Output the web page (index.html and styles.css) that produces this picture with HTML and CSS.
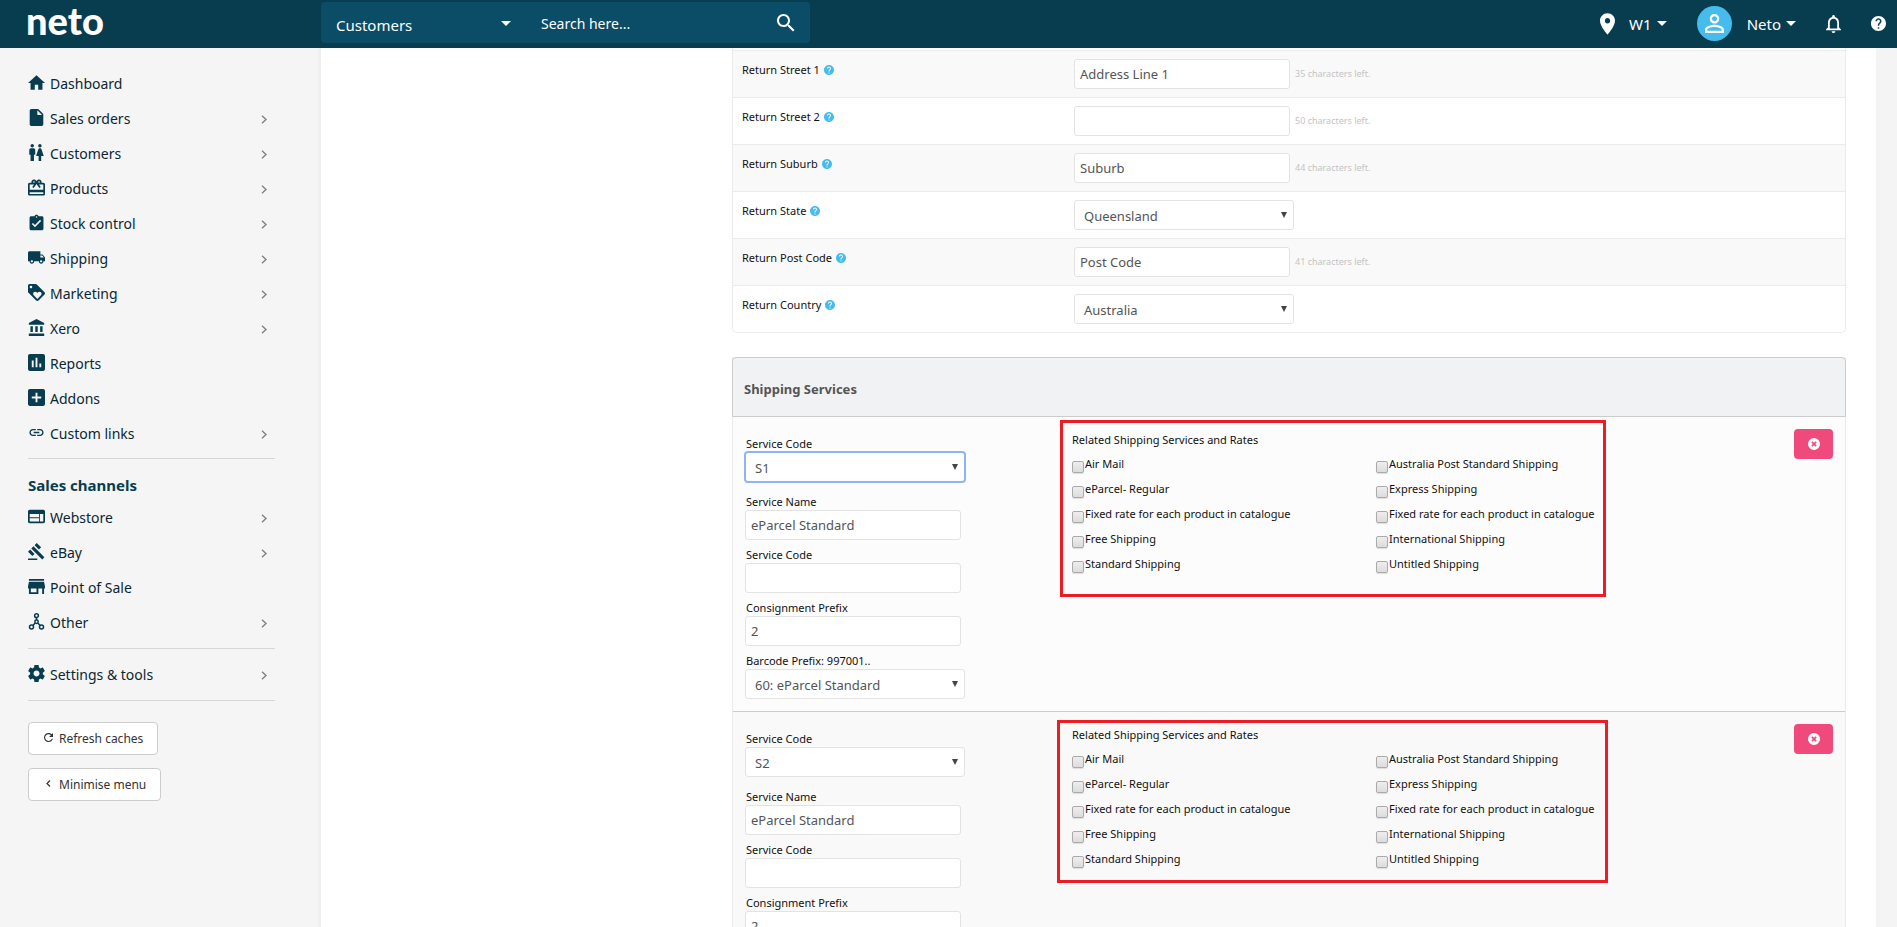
FILE: index.html
```html
<!DOCTYPE html>
<html lang="en">
<head>
<meta charset="utf-8">
<title>Neto - Shipping Services</title>
<link rel="stylesheet" href="styles.css">
</head>
<body>
<svg class="sprite" aria-hidden="true">
  <symbol id="i-home" viewBox="2 3 20 17"><path d="M10 20v-6h4v6h5v-8h3L12 3 2 12h3v8z"/></symbol>
  <symbol id="i-file" viewBox="4 2 16 20"><path d="M6 2c-1.1 0-2 .9-2 2v16c0 1.1.9 2 2 2h12c1.1 0 2-.9 2-2V8l-6-6H6zm7 7V3.500L18.500 9H13z"/></symbol>
  <symbol id="i-people" viewBox="2.500 2 20 20"><path d="M5.500 22v-7.500H4V9c0-1.100.9-2 2-2h3c1.100 0 2 .9 2 2v5.500H9.500V22h-4zM18 22v-6h3l-2.540-7.630C18.180 7.550 17.420 7 16.560 7h-.12c-.86 0-1.630.55-1.900 1.370L12 16h3v6h3zM7.500 6c1.110 0 2-.89 2-2s-.89-2-2-2-2 .89-2 2 .89 2 2 2zm9 0c1.110 0 2-.89 2-2s-.89-2-2-2-2 .89-2 2 .89 2 2 2z"/></symbol>
  <symbol id="i-gift" viewBox="2 2 20 19"><path d="M20 6h-2.180c.11-.31.18-.65.18-1 0-1.660-1.340-3-3-3-1.050 0-1.960.54-2.500 1.350l-.5.67-.5-.68C10.960 2.540 10.050 2 9 2 7.340 2 6 3.340 6 5c0 .35.07.69.18 1H4c-1.110 0-1.990.89-1.990 2L2 19c0 1.110.89 2 2 2h16c1.110 0 2-.89 2-2V8c0-1.110-.89-2-2-2zm-5-2c.55 0 1 .45 1 1s-.45 1-1 1-1-.45-1-1 .45-1 1-1zM9 4c.55 0 1 .45 1 1s-.45 1-1 1-1-.45-1-1 .45-1 1-1zm11 15H4v-2h16v2zm0-5H4V8h5.080L7 10.830 8.620 12 11 8.760l1-1.360 1 1.360L15.380 12 17 10.830 14.920 8H20v6z"/></symbol>
  <symbol id="i-clip" viewBox="1 0 22 22"><path d="M19 3h-4.180C14.400 1.840 13.300 1 12 1c-1.300 0-2.400.84-2.820 2H5c-1.100 0-2 .9-2 2v14c0 1.100.9 2 2 2h14c1.100 0 2-.9 2-2V5c0-1.100-.9-2-2-2zm-7 0c.55 0 1 .45 1 1s-.45 1-1 1-1-.45-1-1 .45-1 1-1zm-2 14l-4-4 1.410-1.410L10 14.170l6.590-6.590L18 9l-8 8z"/></symbol>
  <symbol id="i-truck" viewBox="1 3 22 18"><path d="M20 8h-3V4H3c-1.100 0-2 .9-2 2v11h2c0 1.660 1.340 3 3 3s3-1.340 3-3h6c0 1.660 1.340 3 3 3s3-1.340 3-3h2v-5l-3-4zM6 18.500c-.83 0-1.500-.67-1.500-1.500s.67-1.500 1.500-1.500 1.500.67 1.500 1.500-.67 1.500-1.500 1.500zm13.500-9l1.960 2.500H17V9.500h2.500zm-1.500 9c-.83 0-1.500-.67-1.500-1.500s.67-1.500 1.500-1.500 1.500.67 1.500 1.500-.67 1.500-1.500 1.500z"/></symbol>
  <symbol id="i-tag" viewBox="2 2 20 20"><path d="M21.410 11.580l-9-9C12.050 2.220 11.550 2 11 2H4c-1.100 0-2 .9-2 2v7c0 .55.22 1.050.59 1.420l9 9c.36.36.86.58 1.410.58.55 0 1.050-.22 1.410-.59l7-7c.37-.36.59-.86.59-1.410 0-.55-.23-1.060-.59-1.420zM5.500 7C4.670 7 4 6.330 4 5.500S4.670 4 5.500 4 7 4.670 7 5.500 6.330 7 5.500 7zm11.770 8.270L13 19.540l-4.270-4.270C8.280 14.810 8 14.190 8 13.500c0-1.380 1.120-2.500 2.500-2.500.69 0 1.320.28 1.770.74l.73.72.73-.73c.45-.45 1.080-.73 1.770-.73 1.380 0 2.500 1.120 2.500 2.500 0 .69-.28 1.320-.73 1.770z"/></symbol>
  <symbol id="i-bank" viewBox="1 1 21 21"><path d="M4 10v7h3v-7H4zm6 0v7h3v-7h-3zM2 22h19v-3H2v3zm14-12v7h3v-7h-3zm-4.500-9L2 6v2h19V6l-9.500-5z"/></symbol>
  <symbol id="i-chart" viewBox="3 3 18 18"><path d="M19 3H5c-1.100 0-2 .9-2 2v14c0 1.100.9 2 2 2h14c1.100 0 2-.9 2-2V5c0-1.100-.9-2-2-2zM9 17H7v-7h2v7zm4 0h-2V7h2v10zm4 0h-2v-4h2v4z"/></symbol>
  <symbol id="i-plus" viewBox="3 3 18 18"><path d="M19 3H5c-1.110 0-2 .9-2 2v14c0 1.100.89 2 2 2h14c1.100 0 2-.9 2-2V5c0-1.100-.9-2-2-2zm-2 10h-4v4h-2v-4H7v-2h4V7h2v4h4v2z"/></symbol>
  <symbol id="i-link" viewBox="0 0 24 24"><path d="M3.900 12c0-1.710 1.390-3.100 3.100-3.100h4V7H7c-2.760 0-5 2.240-5 5s2.240 5 5 5h4v-1.900H7c-1.710 0-3.100-1.390-3.100-3.100zM8 13h8v-2H8v2zm9-6h-4v1.900h4c1.710 0 3.100 1.390 3.100 3.100s-1.390 3.100-3.100 3.100h-4V17h4c2.760 0 5-2.240 5-5s-2.240-5-5-5z"/></symbol>
  <symbol id="i-web" viewBox="2 2 20 20"><path d="M20 4H4c-1.100 0-2 .9-2 2v12c0 1.100.9 2 2 2h16c1.100 0 2-.9 2-2V6c0-1.100-.9-2-2-2zm-5 14H4v-4h11v4zm0-5H4V9h11v4zm5 5h-4V9h4v9z"/></symbol>
  <symbol id="i-gavel" viewBox="1 1 22 22"><path d="M1 21h12v2H1zM5.245 8.070l2.830-2.827 14.140 14.142-2.828 2.828zM12.317 1l5.657 5.656-2.830 2.830-5.654-5.660zM3.825 9.485l5.657 5.657-2.828 2.828-5.657-5.657z"/></symbol>
  <symbol id="i-store" viewBox="3 3 18 18"><path d="M20 4H4v2h16V4zm1 10v-2l-1-5H4l-1 5v2h1v6h10v-6h4v6h2v-6h1zm-9 4H6v-4h6v4z"/></symbol>
  <symbol id="i-nodes" viewBox="0 0 17 17"><g fill="none" stroke="currentColor" stroke-width="1.500"><circle cx="8.500" cy="2.700" r="1.900"/><circle cx="8.500" cy="8.800" r="1.700"/><circle cx="3.500" cy="14" r="2"/><circle cx="13.500" cy="14" r="2"/><path d="M8.500 4.600V7M7.200 10l-2.300 2.600M9.800 10l2.300 2.600"/></g></symbol>
  <symbol id="i-gear" viewBox="2 2 20 20"><path d="M19.430 12.980c.04-.32.07-.64.07-.98s-.03-.66-.07-.98l2.110-1.650c.19-.15.24-.42.12-.64l-2-3.460c-.12-.22-.39-.3-.61-.22l-2.490 1c-.52-.4-1.080-.73-1.690-.98l-.38-2.650C14.460 2.180 14.250 2 14 2h-4c-.25 0-.46.18-.49.42l-.38 2.650c-.61.25-1.170.59-1.690.98l-2.490-1c-.23-.09-.49 0-.61.22l-2 3.460c-.13.22-.07.49.12.64l2.110 1.650c-.04.32-.07.65-.07.98s.03.66.07.98l-2.110 1.650c-.19.15-.24.42-.12.64l2 3.460c.12.22.39.3.61.22l2.490-1c.52.4 1.080.73 1.690.98l.38 2.650c.03.24.24.42.49.42h4c.25 0 .46-.18.49-.42l.38-2.650c.61-.25 1.170-.59 1.690-.98l2.490 1c.23.09.49 0 .61-.22l2-3.460c.12-.22.07-.49-.12-.64l-2.110-1.650zM12 15.500c-1.930 0-3.500-1.570-3.500-3.500s1.570-3.500 3.500-3.500 3.500 1.570 3.500 3.500-1.570 3.500-3.500 3.500z"/></symbol>
  <symbol id="i-chev" viewBox="0 0 6 9"><path d="M1 .7l4 3.800-4 3.800" fill="none" stroke="currentColor" stroke-width="1.400"/></symbol>
  <symbol id="i-back" viewBox="0 0 6 9"><path d="M4.500 1.500l-3 3 3 3" fill="none" stroke="currentColor" stroke-width="1.200"/></symbol>
  <symbol id="i-refresh" viewBox="4 4 16 16"><path d="M17.650 6.350C16.200 4.900 14.210 4 12 4c-4.420 0-7.990 3.580-7.990 8s3.570 8 7.990 8c3.730 0 6.840-2.550 7.730-6h-2.080c-.82 2.330-3.040 4-5.650 4-3.310 0-6-2.690-6-6s2.690-6 6-6c1.660 0 3.140.69 4.220 1.780L13 11h7V4l-2.350 2.350z"/></symbol>
  <symbol id="i-search" viewBox="3 3 18 18"><path d="M15.500 14h-.79l-.28-.27C15.410 12.590 16 11.110 16 9.500 16 5.910 13.090 3 9.500 3S3 5.910 3 9.500 5.910 16 9.500 16c1.610 0 3.090-.59 4.230-1.570l.27.28v.79l5 4.990L20.490 19l-4.990-5zm-6 0C7.010 14 5 11.990 5 9.500S7.010 5 9.500 5 14 7.010 14 9.500 11.990 14 9.500 14z"/></symbol>
  <symbol id="i-pin" viewBox="5 2 14 20"><path d="M12 2C8.130 2 5 5.130 5 9c0 5.250 7 13 7 13s7-7.750 7-13c0-3.870-3.130-7-7-7zm0 9.500c-1.380 0-2.500-1.120-2.500-2.500s1.120-2.500 2.500-2.500 2.500 1.120 2.500 2.500-1.120 2.500-2.500 2.500z"/></symbol>
  <symbol id="i-person" viewBox="4 4 16 16"><path d="M12 5.900c1.160 0 2.100.94 2.100 2.100s-.94 2.100-2.100 2.100S9.900 9.160 9.900 8s.94-2.100 2.100-2.100m0 9c2.970 0 6.100 1.460 6.100 2.100v1.100H5.900V17c0-.64 3.130-2.100 6.100-2.100M12 4C9.790 4 8 5.790 8 8s1.790 4 4 4 4-1.790 4-4-1.790-4-4-4zm0 9c-2.670 0-8 1.340-8 4v3h16v-3c0-2.660-5.330-4-8-4z"/></symbol>
  <symbol id="i-bell" viewBox="4 2.500 16 19.500"><path d="M12 22c1.100 0 2-.9 2-2h-4c0 1.100.9 2 2 2zm6-6v-5c0-3.070-1.630-5.640-4.500-6.320V4c0-.83-.67-1.500-1.500-1.500s-1.500.67-1.500 1.500v.68C7.640 5.360 6 7.920 6 11v5l-2 2v1h16v-1l-2-2zm-2 1H8v-6c0-2.480 1.510-4.500 4-4.500s4 2.020 4 4.500v6z"/></symbol>
  <symbol id="i-help" viewBox="2 2 20 20"><path d="M12 2C6.480 2 2 6.480 2 12s4.480 10 10 10 10-4.480 10-10S17.520 2 12 2zm1 17h-2v-2h2v2zm2.070-7.750l-.9.920C13.450 12.900 13 13.500 13 15h-2v-.5c0-1.100.45-2.100 1.170-2.830l1.240-1.260c.37-.36.59-.86.59-1.410 0-1.100-.9-2-2-2s-2 .9-2 2H8c0-2.210 1.790-4 4-4s4 1.790 4 4c0 .88-.36 1.680-.93 2.250z"/></symbol>
  <symbol id="i-close" viewBox="0 0 12 12"><path fill-rule="evenodd" d="M6 0a6 6 0 100 12A6 6 0 006 0zM3.300 4.500l1.200-1.200L6 4.800l1.500-1.500 1.200 1.200L7.200 6l1.500 1.500-1.200 1.200L6 7.200 4.500 8.700 3.300 7.500 4.800 6z"/></symbol>
</svg>

<header class="topbar">
  <div class="brand"><a class="logo" href="#">neto</a></div>
  <form class="search">
    <select class="search-scope" aria-label="Search in"><option>Customers</option></select>
    <input class="search-text" type="text" placeholder="Search here..." aria-label="Search">
    <button class="search-go" type="button" aria-label="Search"><svg><use href="#i-search"/></svg></button>
  </form>
  <nav class="tools" aria-label="Account">
    <a class="tool tool-site" href="#"><svg class="pin"><use href="#i-pin"/></svg><span class="caret">W1</span></a>
    <a class="tool tool-user" href="#"><span class="avatar"><svg><use href="#i-person"/></svg></span><span class="caret">Neto</span></a>
    <a class="tool tool-bell" href="#" aria-label="Notifications"><svg class="bell"><use href="#i-bell"/></svg></a>
    <a class="tool" href="#" aria-label="Help"><svg class="help"><use href="#i-help"/></svg></a>
  </nav>
</header>

<div class="shell">
  <aside class="sidebar">
    <ul class="menu">
      <li><a href="#"><svg class="ico"><use href="#i-home"/></svg>Dashboard</a></li>
      <li><a href="#"><svg class="ico"><use href="#i-file"/></svg>Sales orders<svg class="chev"><use href="#i-chev"/></svg></a></li>
      <li><a href="#"><svg class="ico"><use href="#i-people"/></svg>Customers<svg class="chev"><use href="#i-chev"/></svg></a></li>
      <li><a href="#"><svg class="ico"><use href="#i-gift"/></svg>Products<svg class="chev"><use href="#i-chev"/></svg></a></li>
      <li><a href="#"><svg class="ico"><use href="#i-clip"/></svg>Stock control<svg class="chev"><use href="#i-chev"/></svg></a></li>
      <li><a href="#"><svg class="ico"><use href="#i-truck"/></svg>Shipping<svg class="chev"><use href="#i-chev"/></svg></a></li>
      <li><a href="#"><svg class="ico"><use href="#i-tag"/></svg>Marketing<svg class="chev"><use href="#i-chev"/></svg></a></li>
      <li><a href="#"><svg class="ico"><use href="#i-bank"/></svg>Xero<svg class="chev"><use href="#i-chev"/></svg></a></li>
      <li><a href="#"><svg class="ico"><use href="#i-chart"/></svg>Reports</a></li>
      <li><a href="#"><svg class="ico"><use href="#i-plus"/></svg>Addons</a></li>
      <li><a href="#"><svg class="ico"><use href="#i-link"/></svg>Custom links<svg class="chev"><use href="#i-chev"/></svg></a></li>
    </ul>
    <h2 class="menu-title">Sales channels</h2>
    <ul class="menu menu-channels">
      <li><a href="#"><svg class="ico"><use href="#i-web"/></svg>Webstore<svg class="chev"><use href="#i-chev"/></svg></a></li>
      <li><a href="#"><svg class="ico"><use href="#i-gavel"/></svg>eBay<svg class="chev"><use href="#i-chev"/></svg></a></li>
      <li><a href="#"><svg class="ico"><use href="#i-store"/></svg>Point of Sale</a></li>
      <li><a href="#"><svg class="ico"><use href="#i-nodes"/></svg>Other<svg class="chev"><use href="#i-chev"/></svg></a></li>
    </ul>
    <ul class="menu menu-settings">
      <li><a href="#"><svg class="ico"><use href="#i-gear"/></svg>Settings &amp; tools<svg class="chev"><use href="#i-chev"/></svg></a></li>
    </ul>
    <div class="side-buttons">
      <button class="side-btn" type="button"><svg><use href="#i-refresh"/></svg>Refresh caches</button>
      <button class="side-btn" type="button"><svg><use href="#i-back"/></svg>Minimise menu</button>
    </div>
  </aside>

  <main class="page">
    <div class="content">
      <div class="address">
        <div class="address-row"><div class="address-label"><label for="st1">Return Street 1</label><svg class="hint"><use href="#i-help"/></svg></div><input class="field" id="st1" type="text" value="Address Line 1"><span class="left">35 characters left.</span></div>
        <div class="address-row"><div class="address-label"><label for="st2">Return Street 2</label><svg class="hint"><use href="#i-help"/></svg></div><input class="field" id="st2" type="text"><span class="left">50 characters left.</span></div>
        <div class="address-row"><div class="address-label"><label for="sub">Return Suburb</label><svg class="hint"><use href="#i-help"/></svg></div><input class="field" id="sub" type="text" value="Suburb"><span class="left">44 characters left.</span></div>
        <div class="address-row"><div class="address-label"><label for="state">Return State</label><svg class="hint"><use href="#i-help"/></svg></div><select class="field" id="state"><option>Queensland</option></select></div>
        <div class="address-row"><div class="address-label"><label for="pc">Return Post Code</label><svg class="hint"><use href="#i-help"/></svg></div><input class="field" id="pc" type="text" value="Post Code"><span class="left">41 characters left.</span></div>
        <div class="address-row"><div class="address-label"><label for="country">Return Country</label><svg class="hint"><use href="#i-help"/></svg></div><select class="field" id="country"><option>Australia</option></select></div>
      </div>

      <section class="services">
        <h2 class="services-title">Shipping Services</h2>

        <div class="service">
          <div class="service-form">
            <label for="a1">Service Code</label>
            <select class="field code active" id="a1"><option>S1</option></select>
            <label for="a2">Service Name</label>
            <input class="field" id="a2" type="text" value="eParcel Standard">
            <label for="a3">Service Code</label>
            <input class="field" id="a3" type="text">
            <label for="a4">Consignment Prefix</label>
            <input class="field" id="a4" type="text" value="2">
            <label for="a5">Barcode Prefix: 997001..</label>
            <select class="field" id="a5"><option>60: eParcel Standard</option></select>
          </div>
          <fieldset class="rates">
            <legend>Related Shipping Services and Rates</legend>
            <div class="rate-grid">
              <label><input type="checkbox">Air Mail</label>
              <label><input type="checkbox">Australia Post Standard Shipping</label>
              <label><input type="checkbox">eParcel- Regular</label>
              <label><input type="checkbox">Express Shipping</label>
              <label><input type="checkbox">Fixed rate for each product in catalogue</label>
              <label><input type="checkbox">Fixed rate for each product in catalogue</label>
              <label><input type="checkbox">Free Shipping</label>
              <label><input type="checkbox">International Shipping</label>
              <label><input type="checkbox">Standard Shipping</label>
              <label><input type="checkbox">Untitled Shipping</label>
            </div>
            <span class="mark mark-first"></span>
          </fieldset>
          <button class="remove" type="button" aria-label="Remove service"><svg><use href="#i-close"/></svg></button>
        </div>

        <div class="service">
          <div class="service-form">
            <label for="b1">Service Code</label>
            <select class="field code" id="b1"><option>S2</option></select>
            <label for="b2">Service Name</label>
            <input class="field" id="b2" type="text" value="eParcel Standard">
            <label for="b3">Service Code</label>
            <input class="field" id="b3" type="text">
            <label for="b4">Consignment Prefix</label>
            <input class="field" id="b4" type="text" value="2">
          </div>
          <fieldset class="rates">
            <legend>Related Shipping Services and Rates</legend>
            <div class="rate-grid">
              <label><input type="checkbox">Air Mail</label>
              <label><input type="checkbox">Australia Post Standard Shipping</label>
              <label><input type="checkbox">eParcel- Regular</label>
              <label><input type="checkbox">Express Shipping</label>
              <label><input type="checkbox">Fixed rate for each product in catalogue</label>
              <label><input type="checkbox">Fixed rate for each product in catalogue</label>
              <label><input type="checkbox">Free Shipping</label>
              <label><input type="checkbox">International Shipping</label>
              <label><input type="checkbox">Standard Shipping</label>
              <label><input type="checkbox">Untitled Shipping</label>
            </div>
            <span class="mark mark-second"></span>
          </fieldset>
          <button class="remove" type="button" aria-label="Remove service"><svg><use href="#i-close"/></svg></button>
        </div>
      </section>
    </div>
  </main>
</div>
</body>
</html>
```

FILE: styles.css
```css
* { box-sizing: border-box; }

body {
  margin: 0;
  height: 100vh;
  display: flex;
  flex-direction: column;
  overflow: hidden;
  background: #f4f4f4;
  color: #111;
  font: 11px/16px "Noto Sans", "Open Sans", sans-serif;
}

button, input, select { font-family: inherit; margin: 0; }
a { color: inherit; text-decoration: none; }
svg { fill: currentColor; flex: none; }
.sprite { position: absolute; width: 0; height: 0; }

/* Top bar */
.topbar {
  flex: none;
  display: flex;
  align-items: flex-start;
  height: 48px;
  padding-right: 11px;
  background: #083d4f;
  color: #fff;
}
.brand { flex: none; width: 321px; padding-left: 26px; }
.logo { font: 900 38px/40px Lato, sans-serif; }

.search {
  display: flex;
  flex: none;
  width: 489px;
  height: 41px;
  margin-top: 2px;
  border-radius: 4px;
  background: #0b4c66;
}
.search-scope, .search-text, .search-go {
  border: 0;
  background: transparent;
  color: #fff;
  font-size: 15px;
  outline: 0;
}
.search-scope {
  appearance: none;
  width: 205px;
  padding: 4px 0 0 15px;
  background: url('data:image/svg+xml,<svg xmlns="http://www.w3.org/2000/svg" width="10" height="5"><path d="M0 0h10L5 5z" fill="white"/></svg>') no-repeat 180px 19px;
}
.search-text { flex: 1; min-width: 0; padding: 2px 0 0 15px; font-size: 14px; }
.search-text::placeholder { color: #fff; opacity: 1; }
.search-go { width: 48px; padding: 0 15px; }
.search-go svg { display: block; width: 18px; height: 18px; }

.tools { display: flex; align-items: center; height: 47px; margin-left: auto; font-size: 15px; }
.tool { display: flex; align-items: center; }
.tool-site { margin-right: 30px; gap: 14px; }
.tool-user { margin-right: 30px; gap: 15px; }
.tool-bell { margin-right: 30px; }
.caret { display: flex; align-items: center; gap: 5px; }
.caret::after { content: ""; border: 5px solid transparent; border-top-color: #fff; border-bottom: 0; }
.pin { width: 15px; height: 22px; }
.avatar { display: grid; place-items: center; width: 35px; height: 35px; border-radius: 50%; background: #45bcec; }
.avatar svg { width: 19px; height: 19px; }
.bell { width: 15px; height: 18px; }
.help { width: 15px; height: 15px; }

.shell { flex: 1; min-height: 0; display: flex; }

/* Sidebar */
.sidebar {
  flex: none;
  width: 321px;
  padding: 18px 46px 0 28px;
  border-right: 3px solid #f0f0f0;
  background: #f5f5f5;
  color: #083d4f;
}
.menu {
  margin: 0;
  padding: 0 0 7px;
  width: 247px;
  list-style: none;
  border-bottom: 1px solid #d6d6d6;
}
.menu a {
  display: flex;
  align-items: center;
  height: 35px;
  gap: 5px;
  color: #0b2733;
  font-size: 14px;
}
.ico { width: 17px; height: 17px; margin-bottom: 3px; color: #083d4f; }
.chev { width: 6px; height: 9px; margin: 2px 8px 0 auto; color: #808080; }
.menu-title { margin: 0; padding: 16px 0 5px; font-size: 15px; line-height: 20px; }
.menu-channels { padding-bottom: 8px; }
.menu-settings { padding: 8px 0; }
.side-buttons { display: flex; flex-direction: column; align-items: flex-start; gap: 13px; padding-top: 21px; }
.side-btn {
  display: flex;
  align-items: center;
  gap: 6px;
  height: 33px;
  padding: 0 14px 0 15px;
  border: 1px solid #ccc;
  border-radius: 4px;
  background: #fff;
  color: #333;
  font-size: 12px;
}
.side-btn svg { width: 9px; height: 9px; margin-bottom: 3px; }

/* Page */
.page {
  flex: 1;
  min-width: 0;
  margin-right: 21px;
  padding: 0 30px 0 411px;
  overflow: hidden;
  background: #fff;
}

.field {
  width: 216px;
  height: 30px;
  padding: 0 5px;
  border: 1px solid #e3e3e3;
  border-radius: 3px;
  background-color: #fff;
  color: #555;
  font-size: 13px;
  outline: 0;
}
select.field {
  appearance: none;
  width: 220px;
  padding: 2px 9px 0;
  background: #fff url('data:image/svg+xml,<svg xmlns="http://www.w3.org/2000/svg" width="6" height="6"><path d="M0 0h6L3 6z" fill="rgb(68,68,68)"/></svg>') no-repeat right 6px top 11px;
}

/* Return address */
.address {
  padding-top: 2px;
  border: 1px solid #ebebeb;
  border-top: 0;
  border-radius: 0 0 5px 5px;
}
.address-row {
  display: flex;
  align-items: flex-start;
  height: 47px;
  padding: 8px 0 0 9px;
  border-top: 1px solid #ebebeb;
}
.address-row:nth-child(odd) { background: #f9f9f9; }
.address-label { flex: none; display: flex; align-items: center; gap: 4px; width: 332px; padding-top: 3px; }
.hint { width: 10px; height: 10px; color: #45bcec; }
.left { padding: 8px 0 0 5px; color: #c4c4c4; font-size: 9px; line-height: 14px; }

/* Shipping services */
.services { margin-top: 24px; border: 1px solid #ebebeb; border-top: 0; }
.services-title {
  margin: 0 -1px;
  padding: 21px 11px 17px;
  border: 1px solid #ccc;
  border-radius: 4px 4px 0 0;
  background: #f1f2f4;
  color: #555;
  font-size: 13px;
  line-height: 20px;
}
.service {
  display: flex;
  align-items: flex-start;
  padding: 12px 12px 6px;
  background: #fcfcfc;
}
.service:nth-of-type(even) { border-top: 1px solid #ccc; background: #f9f9f9; }
.service-form { flex: none; display: flex; flex-direction: column; align-items: flex-start; width: 327px; padding-top: 6px; }
.service-form label { padding: 1px 0 0 1px; line-height: 16px; }
.service-form .field { margin-bottom: 6px; }
.service-form .code { margin-bottom: 11px; }
.service-form .active { border-color: #8fb4f5; box-shadow: 0 0 0 1px #8fb4f5; }

.rates { position: relative; flex: none; width: 600px; margin: 0; padding: 3px 0 0; border: 0; }
.rates legend { float: left; width: 100%; padding: 0; }
.rate-grid { clear: left; display: grid; grid-template-columns: 304px 1fr; padding-top: 8px; }
.rate-grid label { display: flex; align-items: flex-start; gap: 1px; height: 25px; white-space: nowrap; }
.rate-grid input {
  appearance: none;
  width: 12px;
  height: 12px;
  margin: 5px 0 0;
  border: 1px solid #aaa;
  border-radius: 2px;
  background: linear-gradient(#eee, #dcdcdc);
  box-shadow: 0 1px 1px #ddd;
}

/* Annotation frames drawn over the rate lists */
.mark { position: absolute; border: 3px solid #ed1c24; pointer-events: none; }
.mark-first { left: -12px; top: -9px; width: 546px; height: 177px; }
.mark-second { left: -15px; top: -4px; width: 551px; height: 163px; }

.remove {
  display: grid;
  place-items: center;
  width: 39px;
  height: 30px;
  margin-left: auto;
  padding: 0;
  border: 0;
  border-radius: 4px;
  background: #f04a7c;
  color: #fff;
}
.remove svg { width: 12px; height: 12px; }
```
